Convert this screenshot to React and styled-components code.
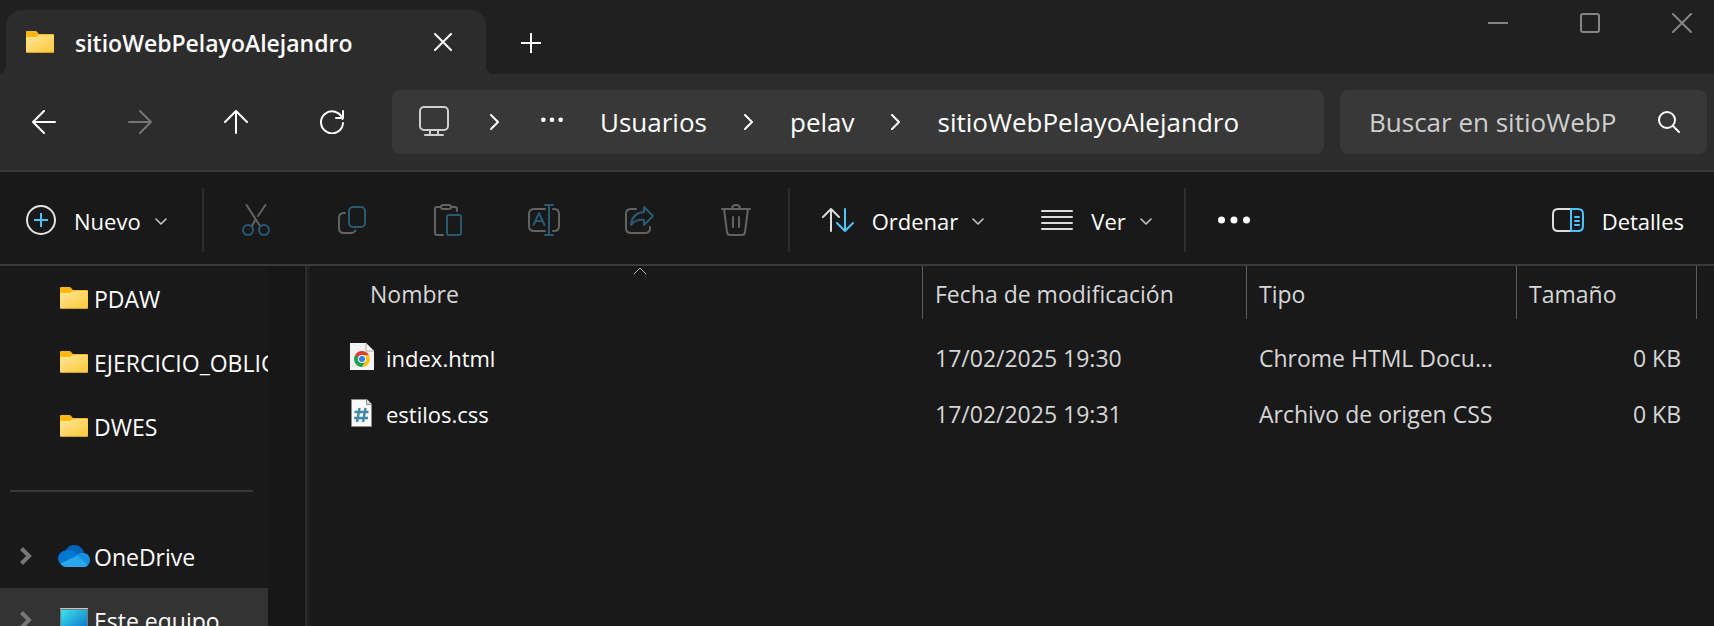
import React from 'react';
import styled, { createGlobalStyle, css } from 'styled-components';

const GlobalStyle = createGlobalStyle`
  *, *::before, *::after { box-sizing: border-box; }
  body {
    margin: 0;
    background: #191919;
    color: #fff;
    font-family: "Open Sans", "Noto Sans", sans-serif;
    font-size: 22px;
  }
  svg { display: block; flex: none; }
`;

const Window = styled.div`
  display: flex;
  flex-direction: column;
  height: 100vh;
  overflow: hidden;
`;

const PlainButton = styled.button`
  display: flex;
  align-items: center;
  justify-content: center;
  flex: none;
  padding: 0;
  border: 0;
  background: none;
  color: inherit;
  font: inherit;
  white-space: nowrap;
`;

/* Title bar */

const TitleBar = styled.header`
  display: flex;
  align-items: flex-end;
  flex: none;
  height: 74px;
  background: #202020;
`;

const Tab = styled.div`
  position: relative;
  display: flex;
  align-items: center;
  width: 480px;
  height: 64px;
  margin-left: 6px;
  padding: 0 34px 0 20px;
  border-radius: 16px 16px 0 0;
  background: #2c2c2c;

  &::before,
  &::after {
    content: '';
    position: absolute;
    bottom: 0;
    width: 8px;
    height: 8px;
  }
  &::before {
    right: 100%;
    background: radial-gradient(circle at 0 0, transparent 8px, #2c2c2c 8px);
  }
  &::after {
    left: 100%;
    background: radial-gradient(circle at 100% 0, transparent 8px, #2c2c2c 8px);
  }
`;

const TabTitle = styled.h1`
  flex: 1;
  margin: 0 0 0 21px;
  padding-top: 2px;
  font-size: 23px;
  font-weight: 600;
  line-height: 32px;
`;

const NewTabButton = styled(PlainButton)`
  width: 66px;
  height: 62px;
  margin-left: 12px;
`;

const WindowControls = styled.div`
  display: flex;
  gap: 28px;
  align-self: flex-start;
  margin-left: auto;
  color: #858585;
`;

const WindowButton = styled(PlainButton)`
  width: 64px;
  height: 46px;
`;

/* Navigation bar */

const NavBar = styled.nav`
  display: flex;
  align-items: center;
  flex: none;
  height: 98px;
  padding: 0 7px 0 12px;
  border-bottom: 2px solid #3a3a3a;
  background: #2c2c2c;
`;

const NavButtons = styled.div`
  display: flex;
  gap: 32px;
  margin-right: 28px;
`;

const NavButton = styled(PlainButton)`
  width: 64px;
  height: 64px;

  &:disabled { color: #757575; }
`;

const fieldBox = css`
  display: flex;
  align-items: center;
  height: 64px;
  border-radius: 8px;
  background: #383838;
  font-size: 26px;
`;

const AddressBar = styled.div`
  ${fieldBox}
  flex: 1;
  gap: 37px;
  min-width: 0;
  overflow: hidden;
  padding-left: 27px;
`;

const CrumbIcon = styled(PlainButton)`
  padding: 0 4px 2px 0;
`;

const CrumbMore = styled(PlainButton)`
  padding: 0 0 5px 5px;
`;

const Crumb = styled.a`
  color: #fff;
  text-decoration: none;
  white-space: nowrap;
`;

const SearchBox = styled.label`
  ${fieldBox}
  flex: none;
  width: 367px;
  margin-left: 16px;
  padding: 0 27px 0 29px;
`;

const SearchInput = styled.input`
  flex: 1;
  min-width: 0;
  height: 40px;
  margin-right: 41px;
  padding: 0;
  border: 0;
  outline: 0;
  background: none;
  color: #fff;
  font: inherit;

  &::placeholder { color: #cfcfcf; opacity: 1; }
`;

/* Command bar */

const CommandBar = styled.div`
  display: flex;
  align-items: center;
  flex: none;
  height: 94px;
  padding-top: 4px;
  border-bottom: 2px solid #3a3a3a;
`;

const Command = styled(PlainButton)`
  gap: 18px;
  height: 64px;
  padding: 0 ${(p) => p.$end}px 0 ${(p) => p.$start}px;
  margin-left: ${(p) => (p.$last ? 'auto' : 0)};
`;

const CommandLabel = styled.span`
  display: flex;
  align-items: center;
  gap: 14px;
  padding-top: 2px;
`;

const IconCommand = styled(PlainButton)`
  width: 96px;
  height: 64px;
`;

const Separator = styled.span`
  flex: none;
  width: 2px;
  height: 64px;
  margin-right: ${(p) => p.$gap || 0}px;
  margin-left: ${(p) => p.$gapBefore || 0}px;
  background: #2d2d2d;
`;

/* Body */

const Body = styled.div`
  display: flex;
  flex: 1;
  min-height: 0;
`;

const Sidebar = styled.aside`
  flex: none;
  width: 268px;
  overflow: hidden;
`;

const SideList = styled.ul`
  margin: 0;
  padding: 0;
  list-style: none;
`;

const SideItem = styled.li`
  display: grid;
  grid-template-columns: 38px 32px 1fr;
  align-items: center;
  height: 64px;
  padding-left: 20px;
  background: ${(p) => (p.$selected ? '#333' : 'none')};
`;

const SideIcon = styled.span`
  display: flex;
  justify-content: center;
`;

const SideLink = styled.a`
  padding: 2px 0 0 4px;
  overflow: hidden;
  color: #fff;
  font-size: 23px;
  text-decoration: none;
  white-space: nowrap;
`;

const SideRule = styled.hr`
  height: 2px;
  margin: 32px 15px 32px 10px;
  border: 0;
  background: #383838;
`;

const Splitter = styled.div`
  flex: none;
  width: 42px;
  border-right: 3px solid #1f1f1f;
  background: linear-gradient(to right, #171717 36px, #131313 36px 37px, #2c2c2c 37px);
`;

const Files = styled.main`
  flex: 1;
  min-width: 0;
  padding-right: 17px;
`;

const FileTable = styled.table`
  width: 100%;
  table-layout: fixed;
  border-collapse: separate;
  border-spacing: 0;
  color: #d6d6d6;
  font-size: 23px;

  tbody::before {
    content: '';
    display: block;
    height: 11px;
  }
`;

const HeadCell = styled.th`
  width: ${(p) => (p.$width ? `${p.$width}px` : 'auto')};
  height: 53px;
  padding: 0 0 0 ${(p) => p.$indent || 0}px;
  border-right: 1px solid #5c5c5c;
  font-weight: 400;
`;

const HeadButton = styled(PlainButton)`
  position: relative;
  justify-content: flex-start;
  width: 100%;
  height: 53px;
  padding: 2px 0 0 12px;
`;

const SortMark = styled.span`
  position: absolute;
  top: 1px;
  left: 50%;
  transform: translateX(-50%);
`;

const Cell = styled.td`
  height: 56px;
  padding: 0 16px 0 12px;
  overflow: hidden;
  text-align: ${(p) => (p.$right ? 'right' : 'left')};
  text-overflow: ellipsis;
  white-space: nowrap;
`;

const NameCell = styled(Cell)`
  padding-left: 40px;
  color: #fff;
  font-size: 22px;
`;

const FileName = styled.span`
  display: flex;
  align-items: center;
  gap: 12px;
`;

/* Icons */

const Stroke = ({ w, h, sw = 2, children, ...rest }) => (
  <svg width={w} height={h} viewBox={`0 0 ${w} ${h}`} fill="none" stroke="currentColor"
    strokeWidth={sw} strokeLinecap="round" strokeLinejoin="round" aria-hidden="true" {...rest}>
    {children}
  </svg>
);

const FolderIcon = () => (
  <svg width="28" height="22" viewBox="0 0 28 22" aria-hidden="true">
    <defs>
      <linearGradient id="folder" x1="0" y1="0" x2="1" y2="1">
        <stop offset="0" stopColor="#ffe69c" />
        <stop offset="1" stopColor="#ffc937" />
      </linearGradient>
    </defs>
    <path d="M1 0H9.5Q10.5 0 11.200 1L12.800 3H27Q28 3 28 4V10H0V1Q0 0 1 0Z" fill="#fdb813" />
    <path d="M0 6H9Q10.500 6 11.500 5L12.500 4H27Q28 4 28 5V21Q28 22 27 22H1Q0 22 0 21Z" fill="#e0a020" />
    <path d="M0 6H9Q10.500 6 11.500 5L12.500 4H28V21H0Z" fill="url(#folder)" />
  </svg>
);

const ChevronDown = () => (
  <Stroke w={12} h={7} sw={1.6} color="#c4c4c4"><path d="M1 1l5 5 5-5" /></Stroke>
);

const CrumbChevron = () => (
  <Stroke w={9} h={16}><path d="M1 1l7 7-7 7" /></Stroke>
);

const Dots = ({ w, r }) => (
  <svg width={w} height={2 * r + 1} viewBox={`0 0 ${w} ${2 * r + 1}`} fill="#fff" aria-hidden="true">
    {[r, w / 2, w - r].map((x) => <circle key={x} cx={x} cy={r + 0.5} r={r} />)}
  </svg>
);

const ExpandChevron = () => (
  <Stroke w={12} h={18} sw={4} color="#777" strokeLinecap="butt" strokeLinejoin="miter">
    <path d="M1.500 1.500L9 9l-7.500 7.500" />
  </Stroke>
);

const GREY = '#636363';
const BLUE = '#2a5a73';

const CutIcon = () => (
  <Stroke w={28} h={32} color={GREY}>
    <path d="M4.500 1L18 22M23.500 1L16 12M13 16.500L10 22" />
    <g stroke={BLUE}><circle cx="6" cy="26" r="5" /><circle cx="22" cy="26" r="5" /></g>
  </Stroke>
);

const CopyIcon = () => (
  <Stroke w={28} h={28} color={GREY}>
    <path d="M7 7H6Q1 7 1 12V22Q1 27 6 27H12Q16.500 27 17.500 24.500" />
    <rect x="11" y="1" width="16" height="20" rx="4" stroke={BLUE} />
  </Stroke>
);

const PasteIcon = () => (
  <Stroke w={28} h={32} color={GREY}>
    <path d="M7 3H3Q1 3 1 5V29Q1 31 3 31H9M17 3H21Q23 3 23 5V7" />
    <rect x="7" y="1" width="10" height="4" rx="2" />
    <rect x="13" y="11" width="14" height="20" rx="2" stroke={BLUE} />
  </Stroke>
);

const RenameIcon = () => (
  <Stroke w={32} h={32} color={GREY}>
    <path d="M17 5H6Q1 5 1 10V22Q1 27 6 27H17M25 5H26Q31 5 31 10V22Q31 27 26 27H25" />
    <path d="M5.500 21L11 9L16.500 21M7.500 17H14.500M17 1H25M17 31H25M21 1V31" stroke={BLUE} />
  </Stroke>
);

const ShareIcon = () => (
  <Stroke w={29} h={28} color={GREY}>
    <path d="M11 3H6Q1 3 1 8V22Q1 27 6 27H20Q25 27 25 22V21" />
    <path d="M19 1L28 10L19 19V14Q11 13 6 19Q7 7 19 6Z" stroke={BLUE} />
  </Stroke>
);

const TrashIcon = () => (
  <Stroke w={30} h={32} color={GREY}>
    <path d="M1 5H29M11 5Q11 1 15 1T19 5M3 5L6 28Q6.500 31 9 31H21Q23.500 31 24 28L27 5M12 13V23M18 13V23" />
  </Stroke>
);

const NewIcon = () => (
  <Stroke w={30} h={30} color="#e3e3e3">
    <circle cx="15" cy="15" r="14" />
    <path d="M15 8V22M8 15H22" stroke="#4cc2ff" strokeLinecap="butt" />
  </Stroke>
);

const SortIcon = () => (
  <Stroke w={32} h={24} color="#dcdcdc">
    <path d="M9 23V1M1 9L9 1L17 9" />
    <path d="M23 1V23M15 15L23 23L31 15" stroke="#4cc2ff" />
  </Stroke>
);

const ViewIcon = () => (
  <Stroke w={32} h={20} color="#dcdcdc"><path d="M1 1H31M1 7H31M1 13H31M1 19H31" /></Stroke>
);

const DetailsIcon = () => (
  <Stroke w={32} h={24} color="#dcdcdc">
    <path d="M19 1H6Q1 1 1 6V18Q1 23 6 23H19" />
    <path d="M19 1H26Q31 1 31 6V18Q31 23 26 23H19ZM23 9H27M23 13H27M23 17H27" stroke="#4cc2ff" />
  </Stroke>
);

const MonitorIcon = () => (
  <Stroke w={30} h={30} color="#cfcfcf">
    <rect x="1" y="1" width="28" height="23" rx="4" />
    <path d="M11 24V29M19 24V29M6 29H24" />
  </Stroke>
);

const CloudIcon = () => (
  <svg width="32" height="22" viewBox="0 0 32 22" aria-hidden="true">
    <path d="M7 6.500C9 2 12.500 0 16 0C21 0 25 3.500 26 8L18 13Z" fill="#0364b8" />
    <path d="M9 5.200C12 4.400 15 6 17 7.300L23 11L3 19C1 17.500 0 15.500 0 13.500C0 9 4 5.400 9 5.200Z" fill="#0078d4" />
    <path d="M18 11C20 8.500 22.500 7.600 25 7.800C29 8 32 11 32 15C32 17 31.300 18.700 30 20L16 14Z" fill="#1490df" />
    <path d="M2.500 18.500L19.500 10.500L30 20C29 21.500 27.500 22 25.500 22H8C5.500 22 3.500 20.500 2.500 18.500Z" fill="#28a8ea" />
  </svg>
);

const ComputerIcon = () => (
  <svg width="28" height="24" viewBox="0 0 28 24" aria-hidden="true">
    <defs>
      <linearGradient id="screen" x1="0" y1="0" x2="1" y2="1">
        <stop offset="0" stopColor="#3ce4ec" />
        <stop offset="1" stopColor="#0a6fc9" />
      </linearGradient>
    </defs>
    <rect width="28" height="24" fill="#6b7f88" />
    <rect width="28" height="1" fill="#c4c4c4" />
    <rect x="1" y="2" width="26" height="21" fill="url(#screen)" />
  </svg>
);

const HtmlFileIcon = () => (
  <svg width="24" height="30" viewBox="0 0 24 30" aria-hidden="true">
    <path d="M0 0H16L24 8V27H0Z" fill="#f3f3f3" />
    <path d="M16 0L24 8H16Z" fill="#fff" stroke="#a9a9a9" />
    <path d="M12 16L12 8L18.900 12A8 8 0 0 1 12 24L15.500 18Z" fill="#ffc20e" />
    <path d="M12 16L15.500 18L12 24A8 8 0 0 1 5.100 12L8.500 18Z" fill="#1f9d4d" />
    <path d="M5.100 12A8 8 0 0 1 18.900 12H12L8.500 18Z" fill="#e33b2e" />
    <path d="M5.100 12L8.500 18L12 16Z" fill="#1f9d4d" />
    <circle cx="12" cy="16" r="4" fill="#fff" />
    <circle cx="12" cy="16" r="3" fill="#2f7df0" />
  </svg>
);

const CssFileIcon = () => (
  <svg width="24" height="30" viewBox="0 0 24 30" aria-hidden="true">
    <path d="M1.500 .5H17L21.500 5V27.500H1.500Z" fill="#fafafa" stroke="#8c8c8c" />
    <path d="M16.500 .5V5.500H21.500" fill="#ddd" stroke="#8c8c8c" />
    <path d="M9.500 9L7 23M15.500 9L13 23M4.500 13H18.500M4 19H18" fill="none" stroke="#4189a8" strokeWidth="2.400" />
  </svg>
);

const places = [
  { name: 'PDAW', icon: <FolderIcon /> },
  { name: 'EJERCICIO_OBLIGATORIO', icon: <FolderIcon /> },
  { name: 'DWES', icon: <FolderIcon /> },
];

const drives = [
  { name: 'OneDrive', icon: <CloudIcon /> },
  { name: 'Este equipo', icon: <ComputerIcon />, selected: true },
];

const files = [
  { name: 'index.html', icon: <HtmlFileIcon />, date: '17/02/2025 19:30', type: 'Chrome HTML Document', size: '0 KB' },
  { name: 'estilos.css', icon: <CssFileIcon />, date: '17/02/2025 19:31', type: 'Archivo de origen CSS', size: '0 KB' },
];

const edits = [
  ['Cortar', CutIcon],
  ['Copiar', CopyIcon],
  ['Pegar', PasteIcon],
  ['Cambiar nombre', RenameIcon],
  ['Compartir', ShareIcon],
  ['Eliminar', TrashIcon],
];

const Places = ({ items, expandable }) => (
  <SideList>
    {items.map((item) => (
      <SideItem key={item.name} $selected={item.selected}>
        <span>{expandable && <ExpandChevron />}</span>
        <SideIcon>{item.icon}</SideIcon>
        <SideLink href="#">{item.name}</SideLink>
      </SideItem>
    ))}
  </SideList>
);

export default function App() {
  return (
    <Window>
      <GlobalStyle />
      <TitleBar>
        <Tab>
          <FolderIcon />
          <TabTitle>sitioWebPelayoAlejandro</TabTitle>
          <PlainButton aria-label="Cerrar pestaña">
            <Stroke w={18} h={18}><path d="M1 1L17 17M17 1L1 17" /></Stroke>
          </PlainButton>
        </Tab>
        <NewTabButton aria-label="Nueva pestaña">
          <Stroke w={20} h={20}><path d="M10 0V20M0 10H20" /></Stroke>
        </NewTabButton>
        <WindowControls>
          <WindowButton aria-label="Minimizar">
            <Stroke w={20} h={20} strokeLinecap="butt"><path d="M0 10H20" /></Stroke>
          </WindowButton>
          <WindowButton aria-label="Maximizar">
            <Stroke w={20} h={20}><rect x="1" y="1" width="18" height="18" rx="2" /></Stroke>
          </WindowButton>
          <WindowButton aria-label="Cerrar">
            <Stroke w={20} h={20}><path d="M1 1L19 19M19 1L1 19" /></Stroke>
          </WindowButton>
        </WindowControls>
      </TitleBar>

      <NavBar>
        <NavButtons>
          <NavButton aria-label="Atrás">
            <Stroke w={24} h={24}><path d="M23 12H1M12 1L1 12L12 23" /></Stroke>
          </NavButton>
          <NavButton aria-label="Adelante" disabled>
            <Stroke w={24} h={24}><path d="M1 12H23M12 1L23 12L12 23" /></Stroke>
          </NavButton>
          <NavButton aria-label="Subir">
            <Stroke w={24} h={24}><path d="M12 23V1M1 12L12 1L23 12" /></Stroke>
          </NavButton>
          <NavButton aria-label="Actualizar">
            <Stroke w={24} h={24}><path d="M22.500 9A11 11 0 1 0 23 13M23 1V8H16" /></Stroke>
          </NavButton>
        </NavButtons>
        <AddressBar>
          <CrumbIcon aria-label="Equipo"><MonitorIcon /></CrumbIcon>
          <CrumbChevron />
          <CrumbMore aria-label="Más ubicaciones"><Dots w={22} r={2.3} /></CrumbMore>
          <Crumb href="#">Usuarios</Crumb>
          <CrumbChevron />
          <Crumb href="#">pelav</Crumb>
          <CrumbChevron />
          <Crumb href="#">sitioWebPelayoAlejandro</Crumb>
        </AddressBar>
        <SearchBox>
          <SearchInput type="text" aria-label="Buscar" placeholder="Buscar en sitioWebPelayoAlejandro" />
          <Stroke w={22} h={22}><circle cx="9" cy="9" r="8" /><path d="M15 15L21 21" /></Stroke>
        </SearchBox>
      </NavBar>

      <CommandBar>
        <Command $start={26} $end={35}>
          <NewIcon />
          <CommandLabel>Nuevo<ChevronDown /></CommandLabel>
        </Command>
        <Separator $gap={4} />
        {edits.map(([label, Icon]) => (
          <IconCommand key={label} aria-label={label} disabled><Icon /></IconCommand>
        ))}
        <Separator $gapBefore={4} />
        <Command $start={32} $end={28}>
          <SortIcon />
          <CommandLabel>Ordenar<ChevronDown /></CommandLabel>
        </Command>
        <Command $start={29} $end={32}>
          <ViewIcon />
          <CommandLabel>Ver<ChevronDown /></CommandLabel>
        </Command>
        <Separator />
        <Command $start={32} $end={32} aria-label="Más opciones"><Dots w={32} r={3.5} /></Command>
        <Command $start={16} $end={30} $last>
          <DetailsIcon />
          <CommandLabel>Detalles</CommandLabel>
        </Command>
      </CommandBar>

      <Body>
        <Sidebar>
          <Places items={places} />
          <SideRule />
          <Places items={drives} expandable />
        </Sidebar>
        <Splitter />
        <Files>
          <FileTable>
            <thead>
              <tr>
                <HeadCell scope="col" $indent={48}>
                  <HeadButton>
                    Nombre
                    <SortMark>
                      <Stroke w={13} h={8} sw={1} color="#b4b4b4"><path d="M.5 7L6.500 1L12.500 7" /></Stroke>
                    </SortMark>
                  </HeadButton>
                </HeadCell>
                <HeadCell scope="col" $width={324}><HeadButton>Fecha de modificación</HeadButton></HeadCell>
                <HeadCell scope="col" $width={270}><HeadButton>Tipo</HeadButton></HeadCell>
                <HeadCell scope="col" $width={180}><HeadButton>Tamaño</HeadButton></HeadCell>
              </tr>
            </thead>
            <tbody>
              {files.map((file) => (
                <tr key={file.name}>
                  <NameCell><FileName>{file.icon}{file.name}</FileName></NameCell>
                  <Cell>{file.date}</Cell>
                  <Cell>{file.type}</Cell>
                  <Cell $right>{file.size}</Cell>
                </tr>
              ))}
            </tbody>
          </FileTable>
        </Files>
      </Body>
    </Window>
  );
}
